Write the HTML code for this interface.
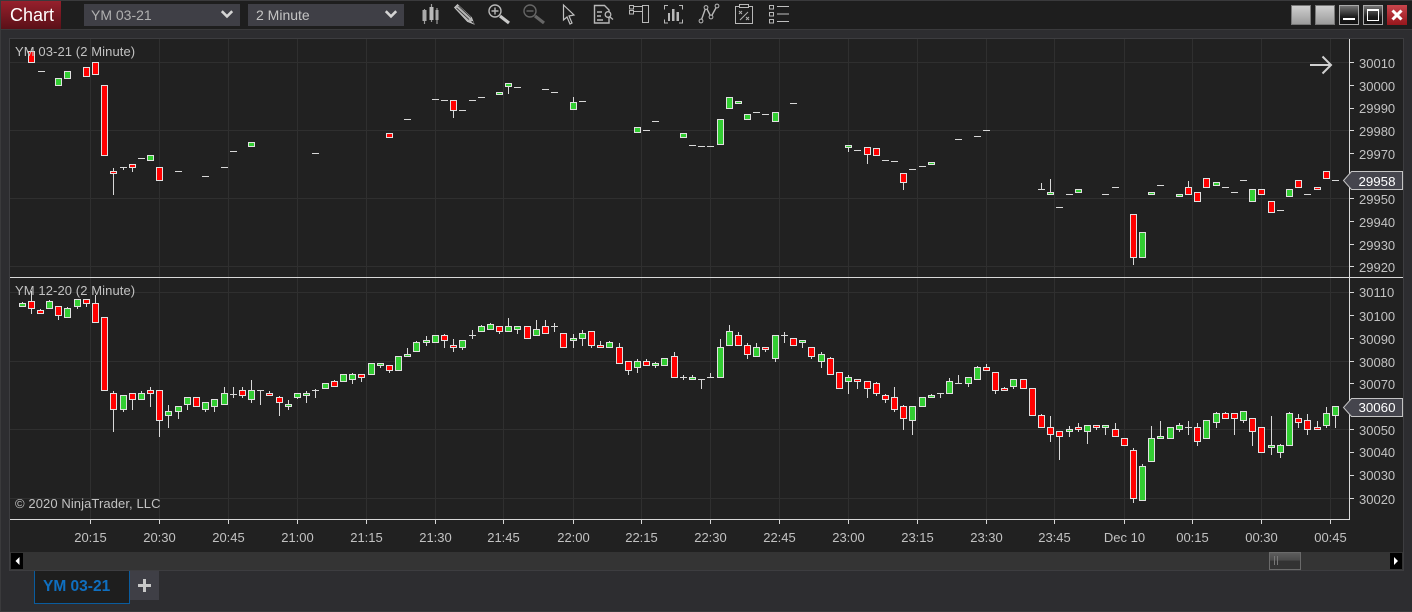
<!DOCTYPE html>
<html><head><meta charset="utf-8"><title>Chart</title>
<style>
html,body{margin:0;padding:0;background:#2d2d30;width:1412px;height:612px;overflow:hidden}
svg{display:block;position:absolute;left:0;top:0}
text{font-family:"Liberation Sans",Arial,sans-serif;font-size:13px;fill:#c2c2c2}
.c{shape-rendering:crispEdges}
.bd{stroke:#e0e0e0;stroke-width:1}
.r{fill:#ff0000}.g{fill:#32cd32}
.w{stroke:#d8d8d8;stroke-width:1;fill:none}
.ic{fill:none;stroke:#b8b8b8;stroke-width:1.4}
.lb{letter-spacing:.09px}
</style></head><body>
<svg width="1412" height="612" viewBox="0 0 1412 612" xmlns="http://www.w3.org/2000/svg">
<defs>
<linearGradient id="rg" x1="0" y1="0" x2="0" y2="1"><stop offset="0" stop-color="#96202c"/><stop offset="1" stop-color="#5a1018"/></linearGradient>
<linearGradient id="gy" x1="0" y1="0" x2="0" y2="1"><stop offset="0" stop-color="#d0d0d0"/><stop offset="1" stop-color="#9a9a9a"/></linearGradient>
<linearGradient id="dk" x1="0" y1="0" x2="0" y2="1"><stop offset="0" stop-color="#777"/><stop offset=".6" stop-color="#1c1c1c"/><stop offset="1" stop-color="#111"/></linearGradient>
<linearGradient id="cl" x1="0" y1="0" x2="0" y2="1"><stop offset="0" stop-color="#c8454c"/><stop offset="1" stop-color="#96161c"/></linearGradient>
<linearGradient id="th" x1="0" y1="0" x2="0" y2="1"><stop offset="0" stop-color="#5e5e5e"/><stop offset=".45" stop-color="#4a4a4a"/><stop offset=".5" stop-color="#333"/><stop offset="1" stop-color="#333"/></linearGradient>
</defs>

<!-- window background -->
<rect width="1412" height="612" fill="#2d2d30"/>
<rect x="0" y="0" width="1412" height="29" fill="#1e1e1e"/>
<rect class="c" x="0" y="29" width="1412" height="1" fill="#3a3a3c"/>
<rect class="c" x="0" y="0" width="1" height="612" fill="#3a3a3c"/>
<rect class="c" x="0" y="0" width="1412" height="1" fill="#3a3a3c"/>
<rect class="c" x="0" y="611" width="1412" height="1" fill="#3a3a3c"/>

<!-- chart button -->
<rect class="c" x="1" y="1" width="60" height="28" fill="url(#rg)"/>
<text x="10" y="21" style="font-size:18px;fill:#fff">Chart</text>

<!-- dropdowns -->
<rect class="c" x="84" y="4" width="156" height="22" fill="#3f3f46"/>
<text x="91" y="20" style="font-size:14px;fill:#b0b0b0">YM 03-21</text>
<path d="M221.800 11.200l5.200 5.200 5.200-5.200" fill="none" stroke="#d4d4d4" stroke-width="2.600"/>
<rect class="c" x="248" y="4" width="156" height="22" fill="#3f3f46"/>
<text x="256" y="20" style="font-size:14px;fill:#c4c4c4">2 Minute</text>
<path d="M385.800 11.200l5.200 5.200 5.200-5.200" fill="none" stroke="#d4d4d4" stroke-width="2.600"/>

<!-- toolbar icons -->
<g>
<path d="M424.500 9V24M431.500 4V22M437 8V24" stroke="#999" stroke-width="1.200"/>
<rect x="422.500" y="10" width="4" height="11" fill="#aaa"/>
<rect x="429.500" y="7" width="4" height="13" fill="#bbb"/>
<rect x="435.500" y="10" width="3" height="10" fill="#aaa"/>
<path d="M454.500 7.500l3-3 14 13 2.500 6.500-6.500-2.500z" fill="#b4b4b4" stroke="#c8c8c8" stroke-width=".8"/>
<path d="M456.500 8l12.500 11.500M458.500 6l12.500 11.500" stroke="#2a2a2a" stroke-width=".8" fill="none"/>
<path d="M471 21.500l3 2.500-1-3z" fill="#222"/>
<circle cx="495" cy="11" r="6" class="ic"/>
<path d="M495 7.500v7M491.500 11h7" class="ic"/>
<path d="M500 16l9 7" stroke="#c8c8c8" stroke-width="3.200"/>
<circle cx="530" cy="11" r="6" fill="none" stroke="#666" stroke-width="1.400"/>
<path d="M526.500 11h7" stroke="#666" stroke-width="1.400"/>
<path d="M535 16l9 7" stroke="#666" stroke-width="3.200"/>
<path d="M563.500 5v15l3.500-3 3 7 2-1-3-7 5-1z" fill="none" stroke="#c0c0c0" stroke-width="1.200"/>
<path d="M594.500 5.500h10l4.500 4.500v13h-14.500z" class="ic"/>
<path d="M597 12h5M597 16h4M597 20h6" class="ic"/>
<circle cx="608" cy="14.500" r="2.800" fill="#1e1e1e" stroke="#b8b8b8" stroke-width="1.300"/>
<path d="M610 17l3 2.500" class="ic"/>
<rect class="c" x="629.500" y="5.500" width="4" height="3.500" fill="none" stroke="#b8b8b8"/>
<rect class="c" x="629.500" y="10.500" width="4" height="3.500" fill="none" stroke="#b8b8b8"/>
<path class="c" d="M634 6.500h8M634 11.500h8" stroke="#b8b8b8" fill="none"/>
<rect class="c" x="642.500" y="5.500" width="6" height="17" fill="none" stroke="#b8b8b8" stroke-width="1.200"/>
<path class="c" d="M668 5.500h-3.500v4M664.500 19.500v3.500h3.500M679 5.500h3.500v4M682.500 19.500v3.500h-3.500" fill="none" stroke="#b8b8b8"/>
<path class="c" d="M668 13h2v8h-2zM672 9h2.500v12h-2.500zM676.500 12h2.500v9h-2.500z" fill="#b8b8b8"/>
<path d="M701 21l5-14 5 10 6-11" class="ic"/>
<circle cx="701" cy="21" r="1.900" fill="#1e1e1e" stroke="#b8b8b8"/>
<circle cx="706" cy="7.500" r="1.900" fill="#1e1e1e" stroke="#b8b8b8"/>
<circle cx="711" cy="17" r="1.900" fill="#1e1e1e" stroke="#b8b8b8"/>
<circle cx="717" cy="6" r="1.900" fill="#1e1e1e" stroke="#b8b8b8"/>
<rect class="c" x="735.500" y="6.500" width="17" height="17" fill="none" stroke="#b8b8b8"/>
<rect class="c" x="739.500" y="4.500" width="9" height="3" fill="#1e1e1e" stroke="#b8b8b8"/>
<path d="M739 11l3 3M742 11l-3 3M746 17l3 3M749 17l-3 3M740 20l8-8" stroke="#b0b0b0" stroke-width="1" fill="none"/>
<rect class="c" x="769.500" y="5.500" width="4" height="3.500" fill="none" stroke="#b8b8b8"/>
<rect class="c" x="769.500" y="12.500" width="4" height="3.500" fill="none" stroke="#b8b8b8"/>
<rect class="c" x="769.500" y="19.500" width="4" height="3.500" fill="none" stroke="#b8b8b8"/>
<path class="c" d="M777 6h12v1h-12zM777 13.500h12v1h-12zM777 21h12v1h-12z" fill="#c0c0c0"/>
</g>

<!-- window buttons -->
<rect class="c" x="1291.500" y="5.500" width="19" height="19" fill="url(#gy)" stroke="#777"/>
<rect class="c" x="1315.500" y="5.500" width="19" height="19" fill="url(#gy)" stroke="#777"/>
<rect class="c" x="1339.500" y="5.500" width="19" height="19" fill="url(#dk)" stroke="#aaa"/>
<rect class="c" x="1343" y="18" width="12" height="2" fill="#fff"/>
<rect class="c" x="1363.500" y="5.500" width="19" height="19" fill="url(#dk)" stroke="#aaa"/>
<rect class="c" x="1367.500" y="9.500" width="11" height="11" fill="none" stroke="#fff"/>
<rect class="c" x="1367" y="9" width="12" height="2" fill="#fff"/>
<rect class="c" x="1387" y="5" width="20" height="20" fill="url(#cl)"/>
<path d="M1392.500 10.500l9 9M1401.500 10.500l-9 9" stroke="#fff" stroke-width="3"/>

<!-- chart frame -->
<rect class="c" x="9.500" y="38.500" width="1394" height="532" fill="#212121" stroke="#3d3d40"/>

<!-- grid -->
<path class="c" d="M90.500 39V519M159.500 39V519M228.500 39V519M297.500 39V519M366.500 39V519M435.500 39V519M503.500 39V519M573.500 39V519M641.500 39V519M710.500 39V519M779.500 39V519M848.500 39V519M917.500 39V519M986.500 39V519M1054.500 39V519M1124.500 39V519M1192.500 39V519M1261.500 39V519M1330.500 39V519M10 62.500H1349M10 130.500H1349M10 198.500H1349M10 266.500H1349M10 292.500H1349M10 361.500H1349M10 429.500H1349M10 498.500H1349" stroke="#2f2f2f" fill="none"/>

<!-- TOP PANEL candles -->
<path class="c w" d="M113.500 168V195M123.500 167V170M132.500 167V172M453.500 110V118M508.500 86V94M573.500 97V103M848.500 147V152M867.500 154V164M903.500 182V190M1041.500 183V189M1050.500 179V192M1133.500 257V265M1188.500 181V188M38 71.500h7M120 167.500h7M138 158.500h7M175 171.500h7M202 176.500h7M221 167.500h7M230 151.500h7M312 153.500h7M404 119.500h7M432 99.500h7M441 100.500h7M459 110.500h7M469 100.500h7M478 97.500h7M514 87.500h7M542 89.500h7M551 92.500h7M579 101.500h7M643 130.500h7M652 121.500h7M689 145.500h7M698 146.500h7M707 146.500h7M753 112.500h7M762 114.500h7M790 103.500h7M854 150.500h7M882 160.500h7M891 161.500h7M909 169.500h7M919 166.500h7M955 139.500h7M974 136.500h7M983 130.500h7M1038 189.500h7M1056 207.500h7M1066 194.500h7M1102 194.500h7M1112 187.500h7M1157 185.500h7M1222 187.500h7M1231 192.500h7M1240 180.500h7M1277 210.500h7M1304 194.500h7M1332 180.500h7"/>
<path class="c r bd" d="M28.500 51.500h6v11h-6zM83.500 67.500h6v9h-6zM92.500 62.500h6v12h-6zM101.500 85.500h6v70h-6zM110.500 171.500h6v2h-6zM129.500 164.500h6v3h-6zM156.500 167.500h6v13h-6zM386.500 133.500h6v4h-6zM450.500 100.500h6v10h-6zM864.500 147.500h6v7h-6zM873.500 148.500h6v7h-6zM900.500 173.500h6v9h-6zM1130.500 214.500h6v43h-6zM1185.500 187.500h6v7h-6zM1194.500 192.500h6v9h-6zM1203.500 178.500h6v9h-6zM1258.500 189.500h6v5h-6zM1268.500 201.500h6v11h-6zM1295.500 180.500h6v7h-6zM1314.500 187.500h6v2h-6zM1323.500 171.500h6v7h-6z"/>
<path class="c g bd" d="M55.500 78.500h6v7h-6zM64.500 71.500h6v7h-6zM147.500 155.500h6v5h-6zM248.500 142.500h6v4h-6zM496.500 92.500h6v2h-6zM505.500 83.500h6v3h-6zM570.500 102.500h6v7h-6zM634.500 127.500h6v5h-6zM680.500 133.500h6v4h-6zM717.500 119.500h6v25h-6zM726.500 97.500h6v11h-6zM735.500 101.500h6v2h-6zM744.500 114.500h6v5h-6zM772.500 112.500h6v9h-6zM845.500 145.500h6v2h-6zM928.500 162.500h6v2h-6zM1047.500 192.500h6v2h-6zM1075.500 189.500h6v3h-6zM1139.500 232.500h6v25h-6zM1148.500 192.500h6v2h-6zM1176.500 194.500h6v2h-6zM1213.500 182.500h6v3h-6zM1249.500 189.500h6v12h-6zM1286.500 189.500h6v7h-6z"/>

<!-- BOTTOM PANEL candles -->
<path class="c w" d="M22.500 302V304M31.500 291V314M40.500 309V311M49.500 300V302M58.500 307V320M67.500 307V309M77.500 305V309M86.500 302V307M95.500 295V304M113.500 391V432M123.500 400V412M132.500 395V410M141.500 391V395M150.500 387V407M159.500 395V437M168.500 405V428M178.500 410V419M187.500 400V410M205.500 405V412M214.500 405V412M224.500 387V394M233.500 387V398M242.500 387V398M251.500 380V403M260.500 390V405M269.500 391V394M279.500 396V416M288.500 400V410M297.500 396V399M306.500 391V403M315.500 389V398M334.500 380V382M352.500 373V384M361.500 376V382M380.500 365V368M389.500 370V373M407.500 348V355M416.500 341V343M426.500 336V346M444.500 334V348M453.500 339V352M462.500 345V350M472.500 330V339M481.500 325V327M490.500 323V325M499.500 330V334M508.500 318V327M517.500 329V334M536.500 320V330M545.500 320V327M554.500 323V332M573.500 334V348M582.500 330V346M591.500 345V348M600.500 341V346M609.500 341V343M619.500 343V348M628.500 370V375M637.500 359V373M646.500 359V362M655.500 362V368M674.500 352V357M683.500 375V380M692.500 375V378M701.500 379V389M710.500 373V377M720.500 339V348M729.500 325V332M738.500 332V336M747.500 343V359M756.500 343V348M765.500 349V352M775.500 358V362M784.500 332V343M802.500 342V348M811.500 356V359M821.500 352V368M830.500 357V359M848.500 375V394M857.500 381V389M867.500 388V398M876.500 382V396M885.500 394V403M894.500 387V412M903.500 405V430M912.500 420V435M931.500 394V396M940.500 393V398M949.500 378V382M958.500 375V383M968.500 383V387M977.500 366V368M986.500 364V368M995.500 390V394M1004.500 387V389M1013.500 386V389M1041.500 414V416M1050.500 416V442M1059.500 436V460M1069.500 426V437M1078.500 423V432M1087.500 431V444M1096.500 427V430M1105.500 427V435M1115.500 423V430M1133.500 448V503M1142.500 464V467M1151.500 426V439M1160.500 421V437M1179.500 423V432M1188.500 421V435M1197.500 423V446M1216.500 412V428M1225.500 412V414M1234.500 418V435M1243.500 420V423M1252.500 431V446M1271.500 416V455M1280.500 444V458M1289.500 412V414M1298.500 414V428M1307.500 414V435M1317.500 421V428M1326.500 407V428M1335.500 415V428M230 394.500h7M257 390.500h7M312 390.500h7M469 335.500h7M551 326.500h7M680 377.500h7M698 379.500h7M707 377.500h7M781 335.500h7M937 393.500h7M955 383.500h7M1185 427.500h7"/>
<path class="c r bd" d="M28.500 301.500h6v7h-6zM37.500 310.500h6v3h-6zM55.500 306.500h6v9h-6zM83.500 299.500h6v4h-6zM92.500 303.500h6v19h-6zM101.500 317.500h6v73h-6zM110.500 393.500h6v16h-6zM129.500 393.500h6v6h-6zM147.500 390.500h6v3h-6zM156.500 390.500h6v30h-6zM193.500 397.500h6v9h-6zM239.500 390.500h6v5h-6zM266.500 393.500h6v2h-6zM276.500 397.500h6v5h-6zM331.500 381.500h6v5h-6zM358.500 374.500h6v3h-6zM386.500 365.500h6v5h-6zM441.500 335.500h6v5h-6zM450.500 345.500h6v2h-6zM496.500 326.500h6v5h-6zM524.500 326.500h6v12h-6zM542.500 326.500h6v7h-6zM560.500 333.500h6v14h-6zM588.500 331.500h6v14h-6zM597.500 345.500h6v2h-6zM616.500 347.500h6v16h-6zM625.500 361.500h6v9h-6zM643.500 361.500h6v4h-6zM671.500 356.500h6v21h-6zM735.500 335.500h6v10h-6zM744.500 345.500h6v9h-6zM762.500 347.500h6v2h-6zM790.500 338.500h6v7h-6zM808.500 347.500h6v9h-6zM827.500 358.500h6v16h-6zM836.500 372.500h6v16h-6zM854.500 379.500h6v2h-6zM864.500 381.500h6v7h-6zM873.500 383.500h6v10h-6zM882.500 395.500h6v4h-6zM891.500 397.500h6v12h-6zM900.500 406.500h6v12h-6zM983.500 367.500h6v3h-6zM992.500 372.500h6v18h-6zM1001.500 388.500h6v2h-6zM1020.500 379.500h6v9h-6zM1029.500 388.500h6v27h-6zM1038.500 415.500h6v12h-6zM1047.500 427.500h6v7h-6zM1056.500 431.500h6v5h-6zM1075.500 427.500h6v2h-6zM1093.500 425.500h6v2h-6zM1112.500 429.500h6v7h-6zM1121.500 438.500h6v7h-6zM1130.500 450.500h6v48h-6zM1194.500 427.500h6v14h-6zM1222.500 413.500h6v5h-6zM1231.500 413.500h6v5h-6zM1249.500 418.500h6v13h-6zM1258.500 427.500h6v25h-6zM1295.500 418.500h6v4h-6zM1304.500 420.500h6v9h-6zM1314.500 427.500h6v2h-6z"/>
<path class="c g bd" d="M19.500 303.500h6v3h-6zM46.500 301.500h6v7h-6zM64.500 308.500h6v9h-6zM74.500 299.500h6v7h-6zM120.500 395.500h6v14h-6zM138.500 393.500h6v6h-6zM165.500 411.500h6v4h-6zM175.500 406.500h6v5h-6zM184.500 397.500h6v7h-6zM202.500 402.500h6v7h-6zM211.500 399.500h6v7h-6zM221.500 393.500h6v11h-6zM248.500 390.500h6v9h-6zM285.500 404.500h6v2h-6zM294.500 393.500h6v4h-6zM303.500 393.500h6v2h-6zM322.500 383.500h6v5h-6zM340.500 374.500h6v7h-6zM349.500 374.500h6v5h-6zM368.500 363.500h6v11h-6zM377.500 363.500h6v2h-6zM395.500 356.500h6v14h-6zM404.500 354.500h6v2h-6zM413.500 342.500h6v9h-6zM423.500 340.500h6v2h-6zM432.500 335.500h6v7h-6zM459.500 340.500h6v7h-6zM478.500 326.500h6v5h-6zM487.500 324.500h6v5h-6zM505.500 326.500h6v5h-6zM514.500 326.500h6v3h-6zM533.500 329.500h6v6h-6zM570.500 338.500h6v2h-6zM579.500 333.500h6v5h-6zM606.500 342.500h6v5h-6zM634.500 361.500h6v6h-6zM652.500 363.500h6v2h-6zM661.500 358.500h6v7h-6zM689.500 377.500h6v2h-6zM717.500 347.500h6v30h-6zM726.500 331.500h6v14h-6zM753.500 347.500h6v9h-6zM772.500 335.500h6v23h-6zM799.500 340.500h6v2h-6zM818.500 354.500h6v7h-6zM845.500 377.500h6v4h-6zM909.500 406.500h6v14h-6zM919.500 397.500h6v9h-6zM928.500 395.500h6v2h-6zM946.500 381.500h6v12h-6zM965.500 377.500h6v6h-6zM974.500 367.500h6v12h-6zM1010.500 379.500h6v7h-6zM1066.500 429.500h6v2h-6zM1084.500 425.500h6v6h-6zM1102.500 425.500h6v2h-6zM1139.500 466.500h6v34h-6zM1148.500 438.500h6v23h-6zM1157.500 436.500h6v2h-6zM1167.500 427.500h6v11h-6zM1176.500 425.500h6v4h-6zM1203.500 420.500h6v18h-6zM1213.500 413.500h6v9h-6zM1240.500 411.500h6v9h-6zM1268.500 445.500h6v2h-6zM1277.500 445.500h6v7h-6zM1286.500 413.500h6v32h-6zM1323.500 413.500h6v12h-6zM1332.500 406.500h6v9h-6z"/>

<!-- axes -->
<path class="c" d="M1349.500 39V520M10 277.500H1403M10 519.500H1350" stroke="#d8d8d8" fill="none"/>
<path class="c" d="M1349 62.500h5M1349 85.500h5M1349 108.500h5M1349 130.500h5M1349 153.500h5M1349 198.500h5M1349 221.500h5M1349 244.500h5M1349 266.500h5M1349 292.500h5M1349 315.500h5M1349 338.500h5M1349 361.500h5M1349 383.500h5M1349 429.500h5M1349 452.500h5M1349 475.500h5M1349 498.500h5M90.500 520v4M159.500 520v4M228.500 520v4M297.500 520v4M366.500 520v4M435.500 520v4M503.500 520v4M573.500 520v4M641.500 520v4M710.500 520v4M779.500 520v4M848.500 520v4M917.500 520v4M986.500 520v4M1054.500 520v4M1124.500 520v4M1192.500 520v4M1261.500 520v4M1330.500 520v4" stroke="#d8d8d8" fill="none"/>

<!-- arrow -->
<path d="M1310 65h21M1322.500 56.500l8.500 8.500-8.500 8.500" fill="none" stroke="#d0d0d0" stroke-width="2"/>

<!-- price axis labels -->
<g>
<text x="1359" y="68">30010</text><text x="1359" y="91">30000</text><text x="1359" y="113">29990</text><text x="1359" y="136">29980</text><text x="1359" y="159">29970</text><text x="1359" y="204">29950</text><text x="1359" y="227">29940</text><text x="1359" y="250">29930</text><text x="1359" y="272">29920</text>
<text x="1359" y="297">30110</text><text x="1359" y="321">30100</text><text x="1359" y="344">30090</text><text x="1359" y="367">30080</text><text x="1359" y="389">30070</text><text x="1359" y="435">30050</text><text x="1359" y="457">30040</text><text x="1359" y="480">30030</text><text x="1359" y="504">30020</text>
</g>

<!-- flags -->
<path d="M1351.500 171.500H1402.500V189.500H1351.500L1343.500 180.500z" fill="#45454d" stroke="#c4c4c4"/>
<text x="1358.500" y="186" style="fill:#fff;font-size:13.300px">29958</text>
<path d="M1351.500 398.500H1402.500V416.500H1351.500L1343.500 407.500z" fill="#45454d" stroke="#c4c4c4"/>
<text x="1358.500" y="412" style="fill:#fff;font-size:13.300px">30060</text>

<!-- time labels -->
<g text-anchor="middle">
<text x="90.500" y="542">20:15</text><text x="159.500" y="542">20:30</text><text x="228.500" y="542">20:45</text><text x="297.500" y="542">21:00</text><text x="366.500" y="542">21:15</text><text x="435.500" y="542">21:30</text><text x="503.500" y="542">21:45</text><text x="573.500" y="542">22:00</text><text x="641.500" y="542">22:15</text><text x="710.500" y="542">22:30</text><text x="779.500" y="542">22:45</text><text x="848.500" y="542">23:00</text><text x="917.500" y="542">23:15</text><text x="986.500" y="542">23:30</text><text x="1054.500" y="542">23:45</text><text x="1124.500" y="542">Dec 10</text><text x="1192.500" y="542">00:15</text><text x="1261.500" y="542">00:30</text><text x="1330.500" y="542">00:45</text>
</g>

<!-- panel labels -->
<text class="lb" x="15" y="56">YM 03-21 (2 Minute)</text>
<text class="lb" x="15" y="295">YM 12-20 (2 Minute)</text>
<text class="lb" x="15" y="508">© 2020 NinjaTrader, LLC</text>

<!-- scrollbar -->
<rect class="c" x="10" y="552" width="1393" height="18" fill="#343434"/>
<rect class="c" x="11" y="553" width="12" height="16" fill="#000"/>
<path d="M19.500 557v8l-4-4z" fill="#fff"/>
<rect class="c" x="1390" y="553" width="12" height="16" fill="#000"/>
<path d="M1394 557v8l4-4z" fill="#fff"/>
<rect class="c" x="1269.500" y="552.500" width="31" height="17" fill="url(#th)" stroke="#6a6a6a"/>
<path class="c" d="M1274.500 556v9M1277.500 556v9" stroke="#777" fill="none"/>

<!-- tabs -->
<rect class="c" x="34.500" y="570.500" width="95" height="33" fill="#1e1e1e" stroke="#0a5c9e"/>
<rect class="c" x="34" y="570" width="96" height="1" fill="#3d3d40"/>
<text x="43" y="591" style="font-size:15.500px;font-weight:bold;fill:#0f6fc0">YM 03-21</text>
<rect class="c" x="130" y="571" width="29" height="29" fill="#3f3f46"/>
<path class="c" d="M138 584h13v3h-13zM143 579h3v13h-3z" fill="#c8c8c8"/>
</svg>
</body></html>
